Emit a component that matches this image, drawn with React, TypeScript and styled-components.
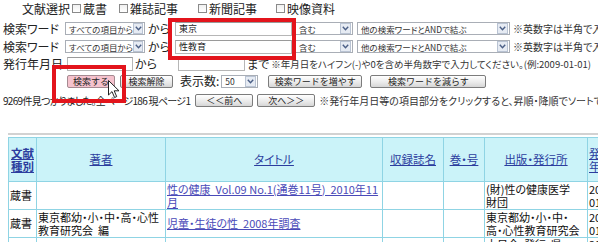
import styled, { createGlobalStyle } from "styled-components";

const Global = createGlobalStyle`
  html, body {
    margin: 0;
    padding: 0;
    background: #fff;
    overflow: hidden;
  }
  body {
    font-family: "Noto Sans CJK JP", "Liberation Sans", sans-serif;
    font-size: 12px;
    color: #111;
    font-feature-settings: "palt";
  }
`;

const Page = styled.div`
  position: relative;
  width: 598px;
  height: 242px;
  overflow: hidden;
`;

const Form = styled.div`
  display: flex;
  flex-direction: column;
  padding-left: 3px;
`;

const Row = styled.div<{ $h: number; $top?: number; $indent?: number }>`
  display: flex;
  align-items: center;
  height: ${(p) => p.$h}px;
  margin-top: ${(p) => p.$top ?? 0}px;
  padding-left: ${(p) => p.$indent ?? 0}px;
  white-space: nowrap;

  & > * {
    flex-shrink: 0;
  }
`;

const Label = styled.span<{ $w?: number; $ml?: number }>`
  display: inline-block;
  width: ${(p) => (p.$w ? `${p.$w}px` : "auto")};
  margin-left: ${(p) => p.$ml ?? 0}px;
  font-size: 12px;
  line-height: 14px;
  color: #222;
`;

const Count = styled.span`
  font-size: 10px;
  letter-spacing: -0.7px;
  line-height: 14px;
  color: #222;
`;

const Note = styled.span<{ $ml?: number; $size?: number }>`
  margin-left: ${(p) => p.$ml ?? 0}px;
  font-size: ${(p) => p.$size ?? 10}px;
  color: #333;
`;

const CheckItem = styled.label<{ $ml: number }>`
  display: inline-flex;
  align-items: center;
  margin-left: ${(p) => p.$ml}px;
  font-size: 12px;
  color: #222;
`;

const Box = styled.span`
  width: 7px;
  height: 7px;
  border: 1px solid #8a8a8a;
  background: linear-gradient(#f0f0f0, #fff);
  margin-right: 2px;
`;

const SelectBox = styled.div<{ $w: number; $ml?: number }>`
  display: flex;
  align-items: center;
  justify-content: space-between;
  box-sizing: border-box;
  width: ${(p) => p.$w}px;
  height: 13px;
  margin-left: ${(p) => p.$ml ?? 0}px;
  padding: 0 1px 0 3px;
  border: 1px solid #a9aeb6;
  background: #fff;
  font-size: 8.5px;
  color: #333;
`;

const ArrowBtn = styled.span`
  display: flex;
  align-items: center;
  justify-content: center;
  width: 9px;
  height: 9px;
  border: 1px solid #b9c3d3;
  background: #e6ebf3;
`;

const TextInput = styled.div<{ $w: number; $ml?: number }>`
  box-sizing: border-box;
  width: ${(p) => p.$w}px;
  height: 14px;
  margin-left: ${(p) => p.$ml ?? 0}px;
  padding-left: 3px;
  border: 1px solid #b6b6b6;
  border-top-color: #9a9a9a;
  background: #fff;
  font-size: 9px;
  line-height: 12px;
  color: #222;
`;

const Btn = styled.button<{ $w: number; $ml?: number; $pink?: boolean }>`
  flex-shrink: 0;
  box-sizing: border-box;
  width: ${(p) => p.$w}px;
  height: 13px;
  margin: 0 0 0 ${(p) => p.$ml ?? 0}px;
  padding: 0;
  border: 1px solid ${(p) => (p.$pink ? "#a58a91" : "#7c7c7c")};
  border-radius: 2px;
  background: ${(p) =>
    p.$pink ? "#f5c2cd" : "linear-gradient(#ffffff, #e9e9e9 60%, #d6d6d6)"};
  font-family: inherit;
  font-size: 9px;
  line-height: 11px;
  color: #222;
`;

const Frame = styled.div<{ $x: number; $y: number; $w: number; $h: number }>`
  position: absolute;
  left: ${(p) => p.$x}px;
  top: ${(p) => p.$y}px;
  width: ${(p) => p.$w}px;
  height: ${(p) => p.$h}px;
  box-sizing: border-box;
  border: 4px solid #e3141c;
  pointer-events: none;
`;

const Cursor = styled.svg`
  position: absolute;
  left: 108px;
  top: 80px;
`;

const Divider = styled.div`
  height: 2px;
  margin: 24px 0 0 8px;
  background: #d2d2d2;
`;

const Table = styled.table`
  border-collapse: collapse;
  table-layout: fixed;
  width: 640px;
  margin: 2px 0 0 8px;
  font-size: 11px;
  line-height: 13px;
`;

const Th = styled.th<{ $bold?: boolean; $left?: boolean }>`
  height: 43px;
  padding: 0 1px;
  border: 1px solid #8fd4e4;
  background: #cbf3f9;
  font-size: 11.5px;
  font-weight: ${(p) => (p.$bold ? 700 : 400)};
  text-align: ${(p) => (p.$left ? "left" : "center")};
  vertical-align: middle;
`;

const Td = styled.td<{ $top?: boolean }>`
  height: 27px;
  padding: 0 1px;
  border: 1px solid #8fd4e4;
  vertical-align: ${(p) => (p.$top ? "top" : "middle")};
  text-align: left;
  color: #111;
  overflow: hidden;
  white-space: nowrap;
`;

const HeadLink = styled.a`
  color: #2c3d9e;
  text-decoration: underline;
`;

const DataLink = styled.a`
  color: #4a4ab8;
  text-decoration: underline;
`;

function Select({ w, ml, text }: { w: number; ml?: number; text: string }) {
  return (
    <SelectBox $w={w} $ml={ml}>
      <span>{text}</span>
      <ArrowBtn>
        <svg width="7" height="5" viewBox="0 0 7 5">
          <polyline points="0.8,0.8 3.5,3.8 6.2,0.8" fill="none" stroke="#4b5f86" strokeWidth="1.4" />
        </svg>
      </ArrowBtn>
    </SelectBox>
  );
}

function Check({ label, ml }: { label: string; ml: number }) {
  return (
    <CheckItem $ml={ml}>
      <Box />
      {label}
    </CheckItem>
  );
}

export default function App() {
  return (
    <Page>
      <Global />
      <Form>
        <Row $h={17} $indent={19}>
          <Label>文献選択</Label>
          <Check label="蔵書" ml={2} />
          <Check label="雑誌記事" ml={12} />
          <Check label="新聞記事" ml={20} />
          <Check label="映像資料" ml={19} />
        </Row>
        <Row $h={17} $top={3}>
          <Label $w={62}>検索ワード</Label>
          <Select w={80} text="すべての項目から" />
          <Label $w={27} $ml={3}>から</Label>
          <TextInput $w={117}>東京</TextInput>
          <Select w={58} ml={3} text="含む" />
          <Select w={153} ml={4} text="他の検索ワードとANDで結ぶ" />
          <Note $ml={3}>※英数字は半角で入力してください。</Note>
        </Row>
        <Row $h={17} $top={1}>
          <Label $w={62}>検索ワード</Label>
          <Select w={80} text="すべての項目から" />
          <Label $w={27} $ml={3}>から</Label>
          <TextInput $w={117}>性教育</TextInput>
          <Select w={58} ml={3} text="含む" />
          <Select w={153} ml={4} text="他の検索ワードとANDで結ぶ" />
          <Note $ml={3}>※英数字は半角で入力してください。</Note>
        </Row>
        <Row $h={17}>
          <Label $w={64}>発行年月日</Label>
          <TextInput $w={66} />
          <Label $w={43} $ml={2}>から</Label>
          <TextInput $w={67} />
          <Label $ml={2}>まで</Label>
          <Note $ml={2} $size={9.5}>
            ※年月日をハイフン(-)や0を含め半角数字で入力してください。(例:2009-01-01)
          </Note>
        </Row>
        <Row $h={18} $indent={64}>
          <Btn $w={48} $pink>検索する</Btn>
          <Btn $w={53} $ml={5}>検索解除</Btn>
          <Label $ml={7}>表示数:</Label>
          <Select w={37} ml={2} text="50" />
          <Btn $w={94} $ml={10}>検索ワードを増やす</Btn>
          <Btn $w={116} $ml={8}>検索ワードを減らす</Btn>
        </Row>
        <Row $h={17} $top={2}>
          <Count>9269件見つかりました。全ページ186&nbsp;現ページ1</Count>
          <Btn $w={58} $ml={5}>＜＜前へ</Btn>
          <Btn $w={58} $ml={4}>次へ＞＞</Btn>
          <Note $ml={4}>※発行年月日等の項目部分をクリックすると、昇順・降順でソートできます。</Note>
        </Row>
      </Form>
      <Divider />
      <Table>
        <colgroup>
          <col style={{ width: 28 }} />
          <col style={{ width: 129 }} />
          <col style={{ width: 217 }} />
          <col style={{ width: 61 }} />
          <col style={{ width: 41 }} />
          <col style={{ width: 103 }} />
          <col style={{ width: 61 }} />
        </colgroup>
        <thead>
          <tr>
            <Th $bold>
              <HeadLink>文献<br />種別</HeadLink>
            </Th>
            <Th><HeadLink>著者</HeadLink></Th>
            <Th><HeadLink>タイトル</HeadLink></Th>
            <Th><HeadLink>収録誌名</HeadLink></Th>
            <Th><HeadLink>巻・号</HeadLink></Th>
            <Th><HeadLink>出版・発行所</HeadLink></Th>
            <Th $left>
              <HeadLink>発行<br />年月日</HeadLink>
            </Th>
          </tr>
        </thead>
        <tbody>
          <tr>
            <Td>蔵書</Td>
            <Td></Td>
            <Td>
              <DataLink>性の健康&nbsp;&nbsp;Vol.09 No.1(通巻11号)&nbsp;&nbsp;2010年11<br />月</DataLink>
            </Td>
            <Td></Td>
            <Td></Td>
            <Td>(財)性の健康医学<br />財団</Td>
            <Td>2010-11-<br />01</Td>
          </tr>
          <tr>
            <Td>蔵書</Td>
            <Td>東京都幼・小・中・高・心性<br />教育研究会&nbsp;&nbsp;編</Td>
            <Td>
              <DataLink>児童・生徒の性&nbsp;&nbsp;2008年調査</DataLink>
            </Td>
            <Td></Td>
            <Td></Td>
            <Td>東京都幼・小・中・<br />高・心性教育研究会</Td>
            <Td>2009-01-<br />01</Td>
          </tr>
          <tr>
            <Td>蔵書</Td>
            <Td></Td>
            <Td></Td>
            <Td></Td>
            <Td></Td>
            <Td $top style={{ height: 40 }}>十日会&nbsp;&nbsp;発行&nbsp;&nbsp;県<br />保健会</Td>
            <Td $top>2008-</Td>
          </tr>
        </tbody>
      </Table>
      <Frame $x={168} $y={18} $w={128} $h={42} />
      <Frame $x={52} $y={65} $w={74} $h={38} />
      <Cursor width="12" height="19" viewBox="0 0 12 19">
        <path
          d="M0.5 0.5 L0.5 15 L4 11.6 L6.6 17.5 L8.7 16.6 L6.2 10.8 L11 10.8 Z"
          fill="#fff"
          stroke="#222"
          strokeWidth="1"
          strokeLinejoin="round"
        />
      </Cursor>
    </Page>
  );
}
